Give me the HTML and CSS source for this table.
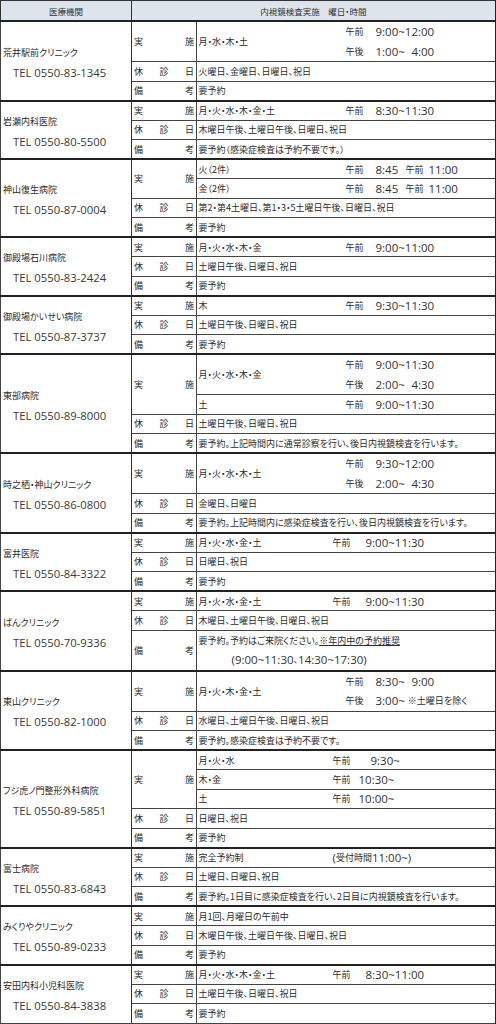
FILE: index.html
```html
<!DOCTYPE html>
<html lang="ja">
<head>
<meta charset="utf-8">
<title>内視鏡検査実施医療機関</title>
<link rel="stylesheet" href="styles.css">
</head>
<body>
<table class="tbl">
<colgroup><col class="c1"><col class="c2"><col class="c3"></colgroup>
<thead>
<tr class="hd"><th>医療機関</th><th colspan="2">内視鏡検査実施　曜日・時間</th></tr>
</thead>

<tbody class="cl">
<tr class="h2"><td rowspan="3" class="nm"><div class="n">荒井駅前クリニック</div><div class="tel">TEL 0550-83-1345</div></td><td class="lb">実施</td>
<td class="ct"><div class="multi"><span class="d a">月・水・木・土</span><div class="tm"><div class="ln"><span class="ap a">午前</span><span class="t">9:00~12:00</span></div><div class="ln"><span class="ap a">午後</span><span class="t">1:00~<span class="p1">4:00</span></span></div></div></div></td></tr>
<tr><td class="lb">休診日</td><td class="ct">火曜日、金曜日、日曜日、祝日</td></tr>
<tr><td class="lb">備考</td><td class="ct">要予約</td></tr>
</tbody>

<tbody class="cl">
<tr><td rowspan="3" class="nm"><div class="n">岩瀬内科医院</div><div class="tel">TEL 0550-80-5500</div></td><td class="lb">実施</td>
<td class="ct"><div class="row"><span class="d a">月・火・水・木・金・土</span><span class="ap a">午前</span><span class="t">8:30~11:30</span></div></td></tr>
<tr><td class="lb">休診日</td><td class="ct">木曜日午後、土曜日午後、日曜日、祝日</td></tr>
<tr><td class="lb">備考</td><td class="ct">要予約（感染症検査は予約不要です。）</td></tr>
</tbody>

<tbody class="cl">
<tr><td rowspan="4" class="nm"><div class="n">神山復生病院</div><div class="tel">TEL 0550-87-0004</div></td><td class="lb" rowspan="2">実施</td>
<td class="ct"><div class="row"><span class="d a">火（2件）</span><span class="ap a">午前</span><span class="t w1">8:45</span><span class="ap b2">午前</span><span class="t">11:00</span></div></td></tr>
<tr><td class="ct"><div class="row"><span class="d a">金（2件）</span><span class="ap a">午前</span><span class="t w1">8:45</span><span class="ap b2">午前</span><span class="t">11:00</span></div></td></tr>
<tr><td class="lb">休診日</td><td class="ct">第2・第4土曜日、第1・3・5土曜日午後、日曜日、祝日</td></tr>
<tr><td class="lb">備考</td><td class="ct">要予約</td></tr>
</tbody>

<tbody class="cl">
<tr><td rowspan="3" class="nm"><div class="n">御殿場石川病院</div><div class="tel">TEL 0550-83-2424</div></td><td class="lb">実施</td>
<td class="ct"><div class="row"><span class="d a">月・火・水・木・金</span><span class="ap a">午前</span><span class="t">9:00~11:00</span></div></td></tr>
<tr><td class="lb">休診日</td><td class="ct">土曜日午後、日曜日、祝日</td></tr>
<tr><td class="lb">備考</td><td class="ct">要予約</td></tr>
</tbody>

<tbody class="cl">
<tr><td rowspan="3" class="nm"><div class="n">御殿場かいせい病院</div><div class="tel">TEL 0550-87-3737</div></td><td class="lb">実施</td>
<td class="ct"><div class="row"><span class="d a">木</span><span class="ap a">午前</span><span class="t">9:30~11:30</span></div></td></tr>
<tr><td class="lb">休診日</td><td class="ct">土曜日午後、日曜日、祝日</td></tr>
<tr><td class="lb">備考</td><td class="ct">要予約</td></tr>
</tbody>

<tbody class="cl">
<tr class="h2"><td rowspan="4" class="nm"><div class="n">東部病院</div><div class="tel">TEL 0550-89-8000</div></td><td class="lb" rowspan="2">実施</td>
<td class="ct"><div class="multi"><span class="d a">月・火・水・木・金</span><div class="tm"><div class="ln"><span class="ap a">午前</span><span class="t">9:00~11:30</span></div><div class="ln"><span class="ap a">午後</span><span class="t">2:00~<span class="p1">4:30</span></span></div></div></div></td></tr>
<tr><td class="ct"><div class="row"><span class="d a">土</span><span class="ap a">午前</span><span class="t">9:00~11:30</span></div></td></tr>
<tr><td class="lb">休診日</td><td class="ct">土曜日午後、日曜日、祝日</td></tr>
<tr><td class="lb">備考</td><td class="ct">要予約。上記時間内に通常診察を行い、後日内視鏡検査を行います。</td></tr>
</tbody>

<tbody class="cl">
<tr class="h2"><td rowspan="3" class="nm"><div class="n">時之栖・神山クリニック</div><div class="tel">TEL 0550-86-0800</div></td><td class="lb">実施</td>
<td class="ct"><div class="multi"><span class="d a">月・火・水・木・土</span><div class="tm"><div class="ln"><span class="ap a">午前</span><span class="t">9:30~12:00</span></div><div class="ln"><span class="ap a">午後</span><span class="t">2:00~<span class="p1">4:30</span></span></div></div></div></td></tr>
<tr><td class="lb">休診日</td><td class="ct">金曜日、日曜日</td></tr>
<tr><td class="lb">備考</td><td class="ct">要予約。上記時間内に感染症検査を行い、後日内視鏡検査を行います。</td></tr>
</tbody>

<tbody class="cl">
<tr><td rowspan="3" class="nm"><div class="n">富井医院</div><div class="tel">TEL 0550-84-3322</div></td><td class="lb">実施</td>
<td class="ct"><div class="row"><span class="d b">月・火・水・金・土</span><span class="ap b">午前</span><span class="t">9:00~11:30</span></div></td></tr>
<tr><td class="lb">休診日</td><td class="ct">日曜日、祝日</td></tr>
<tr><td class="lb">備考</td><td class="ct">要予約</td></tr>
</tbody>

<tbody class="cl">
<tr><td rowspan="3" class="nm"><div class="n">ばんクリニック</div><div class="tel">TEL 0550-70-9336</div></td><td class="lb">実施</td>
<td class="ct"><div class="row"><span class="d b">月・火・水・金・土</span><span class="ap b">午前</span><span class="t">9:00~11:30</span></div></td></tr>
<tr><td class="lb">休診日</td><td class="ct">木曜日、土曜日午後、日曜日、祝日</td></tr>
<tr class="h2"><td class="lb">備考</td><td class="ct"><div class="ln">要予約。予約はご来院ください。<span class="u">※年内中の予約推奨</span></div><div class="ln ind"><span class="t">(9:00~11:30</span>、<span class="t">14:30~17:30)</span></div></td></tr>
</tbody>

<tbody class="cl">
<tr class="h2"><td rowspan="3" class="nm"><div class="n">東山クリニック</div><div class="tel">TEL 0550-82-1000</div></td><td class="lb">実施</td>
<td class="ct"><div class="multi"><span class="d a">月・火・木・金・土</span><div class="tm"><div class="ln"><span class="ap a">午前</span><span class="t">8:30~<span class="p1">9:00</span></span></div><div class="ln"><span class="ap a">午後</span><span class="t">3:00~</span><span class="note">※土曜日を除く</span></div></div></div></td></tr>
<tr><td class="lb">休診日</td><td class="ct">水曜日、土曜日午後、日曜日、祝日</td></tr>
<tr><td class="lb">備考</td><td class="ct">要予約。感染症検査は予約不要です。</td></tr>
</tbody>

<tbody class="cl">
<tr><td rowspan="5" class="nm"><div class="n">フジ虎ノ門整形外科病院</div><div class="tel">TEL 0550-89-5851</div></td><td class="lb" rowspan="3">実施</td>
<td class="ct"><div class="row"><span class="d b">月・火・水</span><span class="ap b2w">午前</span><span class="t p2">9:30~</span></div></td></tr>
<tr><td class="ct"><div class="row"><span class="d b">木・金</span><span class="ap b2w">午前</span><span class="t">10:30~</span></div></td></tr>
<tr><td class="ct"><div class="row"><span class="d b">土</span><span class="ap b2w">午前</span><span class="t">10:00~</span></div></td></tr>
<tr><td class="lb">休診日</td><td class="ct">日曜日、祝日</td></tr>
<tr><td class="lb">備考</td><td class="ct">要予約</td></tr>
</tbody>

<tbody class="cl">
<tr><td rowspan="3" class="nm"><div class="n">富士病院</div><div class="tel">TEL 0550-83-6843</div></td><td class="lb">実施</td>
<td class="ct"><div class="row"><span class="d b">完全予約制</span><span class="rc"><span class="t">(</span>受付時間<span class="t">11:00~)</span></span></div></td></tr>
<tr><td class="lb">休診日</td><td class="ct">土曜日、日曜日、祝日</td></tr>
<tr><td class="lb">備考</td><td class="ct">要予約。1日目に感染症検査を行い、2日目に内視鏡検査を行います。</td></tr>
</tbody>

<tbody class="cl">
<tr><td rowspan="3" class="nm"><div class="n">みくりやクリニック</div><div class="tel">TEL 0550-89-0233</div></td><td class="lb">実施</td>
<td class="ct">月1回、月曜日の午前中</td></tr>
<tr><td class="lb">休診日</td><td class="ct">木曜日午後、土曜日午後、日曜日、祝日</td></tr>
<tr><td class="lb">備考</td><td class="ct">要予約</td></tr>
</tbody>

<tbody class="cl">
<tr><td rowspan="3" class="nm"><div class="n">安田内科小児科医院</div><div class="tel">TEL 0550-84-3838</div></td><td class="lb">実施</td>
<td class="ct"><div class="row"><span class="d b">月・火・水・木・金・土</span><span class="ap b">午前</span><span class="t">8:30~11:00</span></div></td></tr>
<tr><td class="lb">休診日</td><td class="ct">土曜日午後、日曜日、祝日</td></tr>
<tr><td class="lb">備考</td><td class="ct">要予約</td></tr>
</tbody>
</table>
</body>
</html>
```

FILE: styles.css
```css
* { box-sizing: border-box; }
html, body { margin: 0; padding: 0; background: #ffffff; }
body {
  font-family: "Noto Sans CJK JP", sans-serif;
  font-size: 9px;
  color: #2b2b2b;
  font-feature-settings: "palt";
}
.tbl {
  border-collapse: collapse;
  table-layout: fixed;
  width: 495px;
  border: 1px solid #222;
  border-right-width: 2px;
}
col.c1 { width: 131px; }
col.c2 { width: 65px; }
col.c3 { width: 299px; }

.hd { height: 20.5px; }
.hd th {
  background: #dde4ec;
  font-weight: normal;
  font-size: 8.5px;
  color: #333;
  border: 1px solid #333;
  border-bottom: 2px solid #222;
  padding: 0;
  line-height: 12px;
}
tbody.cl { border-top: 2px solid #222; }
tr { height: 19.5px; }
tr.h2 { height: 39px; }
td {
  border: 1px solid #444;
  padding: 0;
  vertical-align: middle;
  line-height: 13px;
  white-space: nowrap;
}
.nm {
  padding: 4px 0 0 2px;
  border-right: 1px solid #333;
}
.nm .n { line-height: 20px; }
.nm .tel {
  font-family: "Open Sans", sans-serif;
  font-size: 11.3px;
  color: #3a3a3a;
  line-height: 20px;
  padding-left: 10px;
}
.lb {
  padding: 0 2px 0 2px;
  text-align: justify;
  text-align-last: justify;
}
.ct { padding: 0 2px 0 1.5px; }
.row, .ln { display: flex; align-items: center; }
.multi { display: flex; align-items: center; }
.tm { display: flex; flex-direction: column; }
.tm .ln { height: 19.5px; }
.ct > .ln { height: 19.5px; }
.ind { padding-left: 33px; }
.d { flex: none; }
.d.a { width: 147px; }
.d.b { width: 134px; }
.ap { flex: none; }
.ap.a { width: 30px; }
.ap.b { width: 33px; }
.ap.b2 { width: 23px; }
.ap.b2w { width: 26px; }
.t {
  font-family: "Open Sans", sans-serif;
  font-size: 11.5px;
  color: #333;
  flex: none;
}
.t.w1 { width: 30px; }
.p1 { padding-left: 0.57em; }
.p2 { padding-left: 12px; }
.note { margin-left: 3px; }
.u { text-decoration: underline; }
.rc { display: flex; align-items: center; }
```
